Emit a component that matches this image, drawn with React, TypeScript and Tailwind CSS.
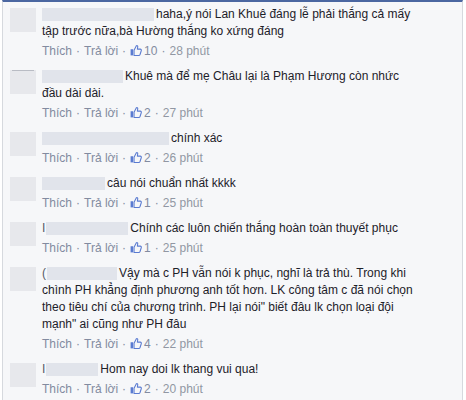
import React from 'react';

type Comment = {
  nameW: number;
  mark?: string;
  lines: string[];
  likes: number;
  time: string;
  avatarTone?: string;
};

const comments: Comment[] = [
  {
    nameW: 112,
    lines: ['haha,ý nói Lan Khuê đáng lễ phải thắng cả mấy', 'tập trước nữa,bà Hường thắng ko xứng đáng'],
    likes: 10,
    time: '28 phút',
  },
  {
    nameW: 81,
    lines: ['Khuê mà để mẹ Châu lại là Phạm Hương còn nhức', 'đầu dài dài.'],
    likes: 2,
    time: '27 phút',
    avatarTone: 'top',
  },
  { nameW: 127, lines: ['chính xác'], likes: 2, time: '26 phút' },
  { nameW: 63, lines: ['câu nói chuẩn nhất kkkk'], likes: 1, time: '25 phút' },
  { nameW: 82, mark: 'I', lines: ['Chính các luôn chiến thắng hoàn toàn thuyết phục'], likes: 1, time: '25 phút' },
  {
    nameW: 70,
    mark: '(',
    lines: [
      'Vậy mà c PH vẫn nói k phục, nghĩ là trả thù. Trong khi',
      'chình PH khẳng định phương anh tốt hơn. LK công tâm c đã nói chọn',
      'theo tiêu chí của chương trình. PH lại nói" biết đâu lk chọn loại đội',
      'mạnh" ai cũng như PH đâu',
    ],
    likes: 4,
    time: '22 phút',
  },
  { nameW: 52, mark: 'I', lines: ['Hom nay doi lk thang vui qua!'], likes: 2, time: '20 phút' },
];

function Thumb() {
  return (
    <svg width="12" height="12" viewBox="0 0 16 16" className="inline-block mr-[2px] -mt-[3px] align-middle">
      <rect x="0.8" y="7" width="3.4" height="8.2" fill="#5a7bd1" />
      <path
        d="M5.4 8.2 L8.3 2.6 C9.2 1.6 10.6 2.4 10.3 3.9 L9.8 6.8 H13.6 C14.8 6.8 15.4 7.9 15 9 L13.4 14 C13.1 14.8 12.5 15.2 11.7 15.2 H5.4 Z"
        fill="none"
        stroke="#5a7bd1"
        strokeWidth="1.4"
        strokeLinejoin="round"
      />
    </svg>
  );
}

function Avatar({ top }: { top?: boolean }) {
  return (
    <div className="relative w-[26px] h-[24px] mt-[2px] shrink-0 bg-[#e7e8ec] blur-[0.5px]">
      {top && <div className="absolute left-[2px] right-[2px] top-0 h-px bg-[#b9bcc4]" />}
    </div>
  );
}

function Row({ c }: { c: Comment }) {
  return (
    <div className="flex pl-[7px] pb-[8px]">
      <Avatar top={c.avatarTone === 'top'} />
      <div className="ml-[6px] text-[12px] leading-[17px] text-[#1d2129] whitespace-nowrap">
        {c.lines.map((l, i) =>
          i === 0 ? (
            <div key={i} className="flex items-center">
              {c.mark && <span className="text-[#555a66] mr-[1px]">{c.mark}</span>}
              <span className="inline-block h-[13px] bg-[#e1e4eb] blur-[0.6px]" style={{ width: c.nameW }} />
              <span className="ml-[2px]">{l}</span>
            </div>
          ) : (
            <div key={i}>{l}</div>
          )
        )}
        <div className="mt-[3px] text-[#828ba0]">
          <span>Thích</span>
          <span className="mx-[4px]">·</span>
          <span>Trả lời</span>
          <span className="mx-[4px]">·</span>
          <Thumb />
          <span>{c.likes}</span>
          <span className="mx-[4px]">·</span>
          <span className="text-[#9197a3]">{c.time}</span>
        </div>
      </div>
    </div>
  );
}

export default function App() {
  return (
    <div className="h-[400px] overflow-hidden bg-white pl-[2px] font-['Liberation_Sans',Arial,sans-serif]">
      <div className="w-[461px] h-[400px] overflow-hidden border-t-2 border-t-[#4b67a1] border-x border-x-[#d6d9de] bg-[#f6f7f9] pt-[4px]">
        {comments.map((c, i) => (
          <Row key={i} c={c} />
        ))}
        <div className="flex pl-[7px]">
          <Avatar />
          <div className="ml-[6px] mt-[2px] h-[13px] w-[90px] bg-[#e1e4eb] blur-[0.6px]" />
        </div>
      </div>
    </div>
  );
}
